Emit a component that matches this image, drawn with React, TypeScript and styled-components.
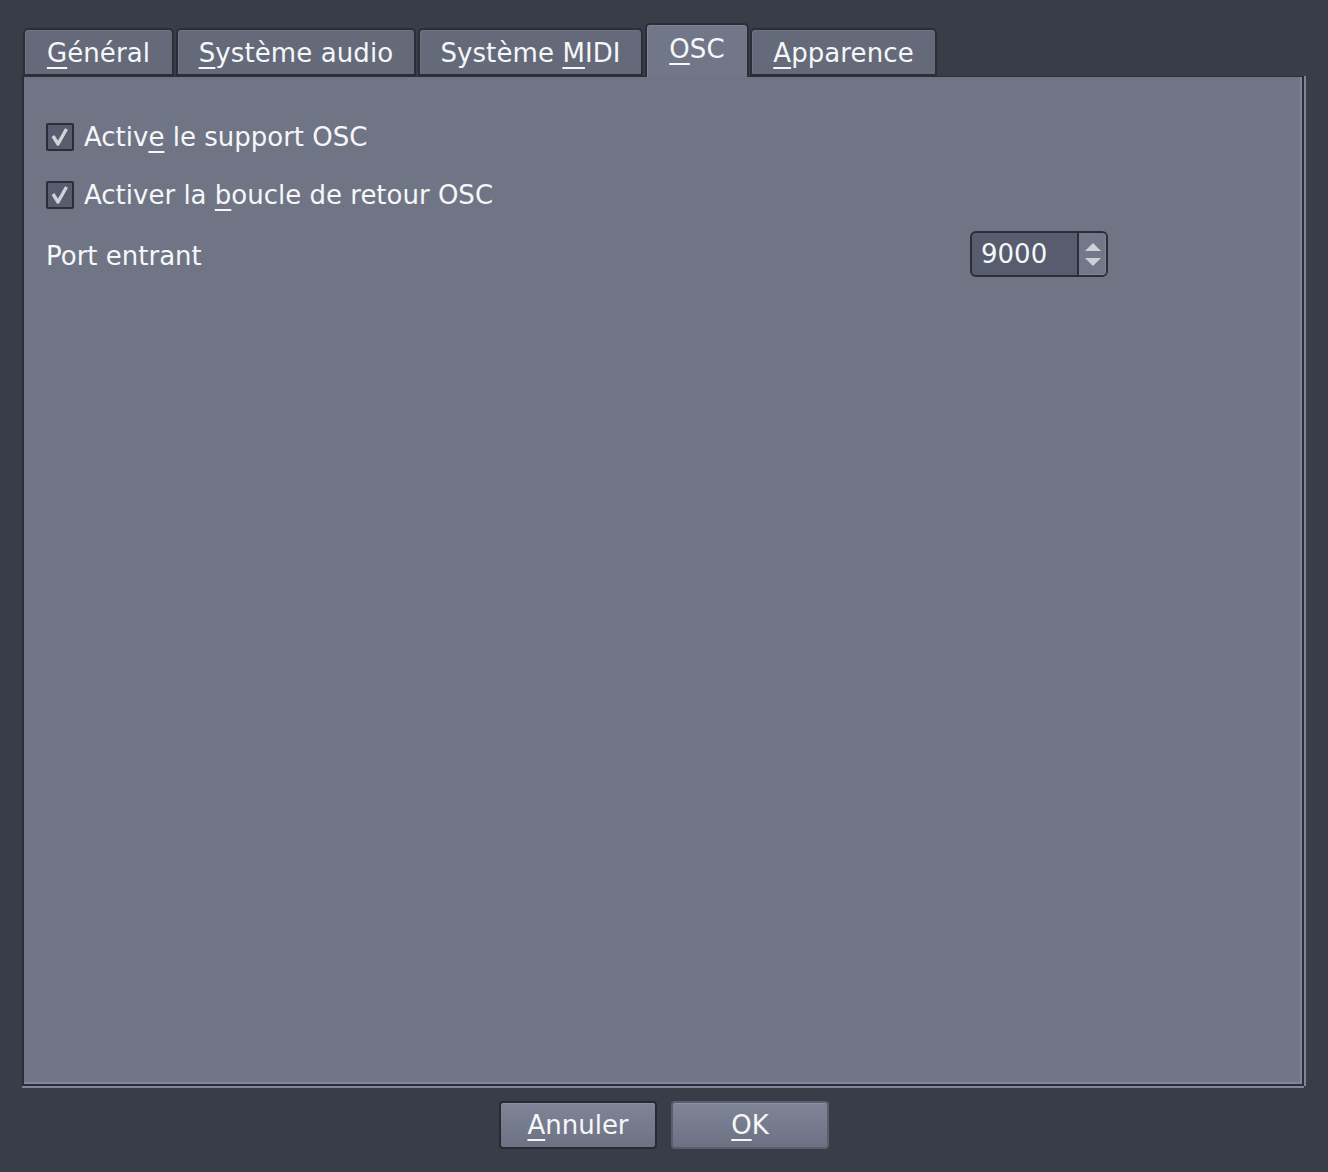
import React from "react";
import styled, { createGlobalStyle } from "styled-components";

const Global = createGlobalStyle`
  html, body { margin: 0; padding: 0; background: #393d48; }
  body { font-family: "DejaVu Sans", "Liberation Sans", sans-serif; color: #f4f5f7; }
  #root { width: 1328px; height: 1172px; }
`;

const Page = styled.div`
  width: 1328px;
  height: 1172px;
  box-sizing: border-box;
  padding: 23px 24px 0 22px;
  display: flex;
  flex-direction: column;
  background: #393d48;
`;

const TabBar = styled.div`
  display: flex;
  align-items: flex-end;
  gap: 2px;
  padding-left: 1px;
  height: 53px;
  position: relative;
  z-index: 2;
`;

const Tab = styled.div<{ $active?: boolean; $w: number }>`
  box-sizing: border-box;
  flex-shrink: 0;
  height: ${(p) => (p.$active ? "54px" : "48px")};
  width: ${(p) => p.$w}px;
  display: flex;
  align-items: center;
  justify-content: center;
  font-size: 26px;
  letter-spacing: 0.1px;
  color: #f6f7f9;
  background: ${(p) => (p.$active ? "#717788" : "#646a79")};
  border: 2px solid #2b2e37;
  border-bottom: ${(p) => (p.$active ? "none" : "2px solid #2b2e37")};
  border-radius: 5px 5px 0 0;
  box-shadow: inset 1px 1px 0 ${(p) => (p.$active ? "#7e8495" : "#6e7483")};
  padding-top: ${(p) => (p.$active ? "0" : "2px")};
  padding-bottom: ${(p) => (p.$active ? "5px" : "0")};
  margin: ${(p) => (p.$active ? "0 -1px -1px 0" : "0")};
`;

const Mn = styled.span`
  text-decoration: underline;
  text-decoration-thickness: 2px;
  text-underline-offset: 5px;
`;

const Panel = styled.div`
  box-sizing: border-box;
  height: 1010px;
  background: #6f7585;
  border: 2px solid #2b2e37;
  border-top-width: 1px;
  box-shadow: inset -2px -2px 0 #80869a, 0 2px 0 #80869a, 2px 0 0 #80869a;
  padding: 46px 24px 0 22px;
  display: flex;
  flex-direction: column;
`;

const CheckRow = styled.label<{ $mb?: number }>`
  display: flex;
  align-items: center;
  gap: 10px;
  height: 28px;
  font-size: 26px;
  color: #f6f7f9;
  margin-bottom: ${(p) => p.$mb ?? 0}px;
`;

const Box = styled.span`
  box-sizing: border-box;
  width: 28px;
  height: 28px;
  border: 2px solid #2b2e37;
  border-radius: 2px;
  background: #575c6e;
  display: flex;
  align-items: center;
  justify-content: center;
  flex-shrink: 0;
`;

const FormRow = styled.div`
  display: grid;
  grid-template-columns: 924px auto;
  align-items: center;
  margin-top: 22px;
`;

const Label = styled.span`
  font-size: 26px;
  color: #f6f7f9;
  padding-top: 3px;
`;

const Spin = styled.div`
  box-sizing: border-box;
  width: 138px;
  height: 46px;
  border: 2px solid #2b2e37;
  border-radius: 6px;
  display: flex;
  overflow: hidden;
  background: #575c6e;
`;

const SpinValue = styled.div`
  flex: 1;
  display: flex;
  align-items: center;
  padding-left: 9px;
  font-size: 26px;
  color: #f6f7f9;
  border-right: 2px solid #2b2e37;
`;

const SpinArrows = styled.div`
  width: 27px;
  background: #727889;
  box-shadow: inset -1px -1px 0 #80869a;
  display: flex;
  flex-direction: column;
  align-items: center;
  justify-content: center;
  gap: 7px;
`;

const Footer = styled.div`
  display: flex;
  justify-content: center;
  gap: 14px;
  padding-top: 15px;
  padding-left: 2px;
`;

const Button = styled.button<{ $default?: boolean }>`
  box-sizing: border-box;
  width: 158px;
  height: 48px;
  font-family: "DejaVu Sans", "Liberation Sans", sans-serif;
  font-size: 26px;
  color: #f6f7f9;
  background: linear-gradient(#7f8597, #6c7283);
  border: 2px solid ${(p) => (p.$default ? "#5a5f70" : "#272a32")};
  border-radius: 4px;
  box-shadow: inset 0 1px 0 #8c92a3;
  padding: 0;
  display: flex;
  align-items: center;
  justify-content: center;
`;

const Check = () => (
  <svg width="20" height="20" viewBox="0 0 20 20">
    <path d="M3 9 L8 17 L16.5 2" fill="none" stroke="#cfd2d9" strokeWidth="3.4" strokeLinejoin="round" />
  </svg>
);

const Arrow = ({ up }: { up?: boolean }) => (
  <svg width="16" height="8" viewBox="0 0 16 8">
    <path d={up ? "M0 8 L8 0 L16 8 Z" : "M0 0 L16 0 L8 8 Z"} fill="#cdd0d8" />
  </svg>
);

export default function App() {
  return (
    <>
      <Global />
      <Page>
        <TabBar>
          <Tab $w={151}>
            <span><Mn>G</Mn>énéral</span>
          </Tab>
          <Tab $w={240}>
            <span><Mn>S</Mn>ystème audio</span>
          </Tab>
          <Tab $w={225}>
            <span>Système <Mn>M</Mn>IDI</span>
          </Tab>
          <Tab $active $w={104}>
            <span><Mn>O</Mn>SC</span>
          </Tab>
          <Tab $w={187}>
            <span><Mn>A</Mn>pparence</span>
          </Tab>
        </TabBar>
        <Panel>
          <CheckRow $mb={30}>
            <Box><Check /></Box>
            <span>Activ<Mn>e</Mn> le support OSC</span>
          </CheckRow>
          <CheckRow>
            <Box><Check /></Box>
            <span>Activer la <Mn>b</Mn>oucle de retour OSC</span>
          </CheckRow>
          <FormRow>
            <Label>Port entrant</Label>
            <Spin>
              <SpinValue>9000</SpinValue>
              <SpinArrows>
                <Arrow up />
                <Arrow />
              </SpinArrows>
            </Spin>
          </FormRow>
        </Panel>
        <Footer>
          <Button><span><Mn>A</Mn>nnuler</span></Button>
          <Button $default><span><Mn>O</Mn>K</span></Button>
        </Footer>
      </Page>
    </>
  );
}
